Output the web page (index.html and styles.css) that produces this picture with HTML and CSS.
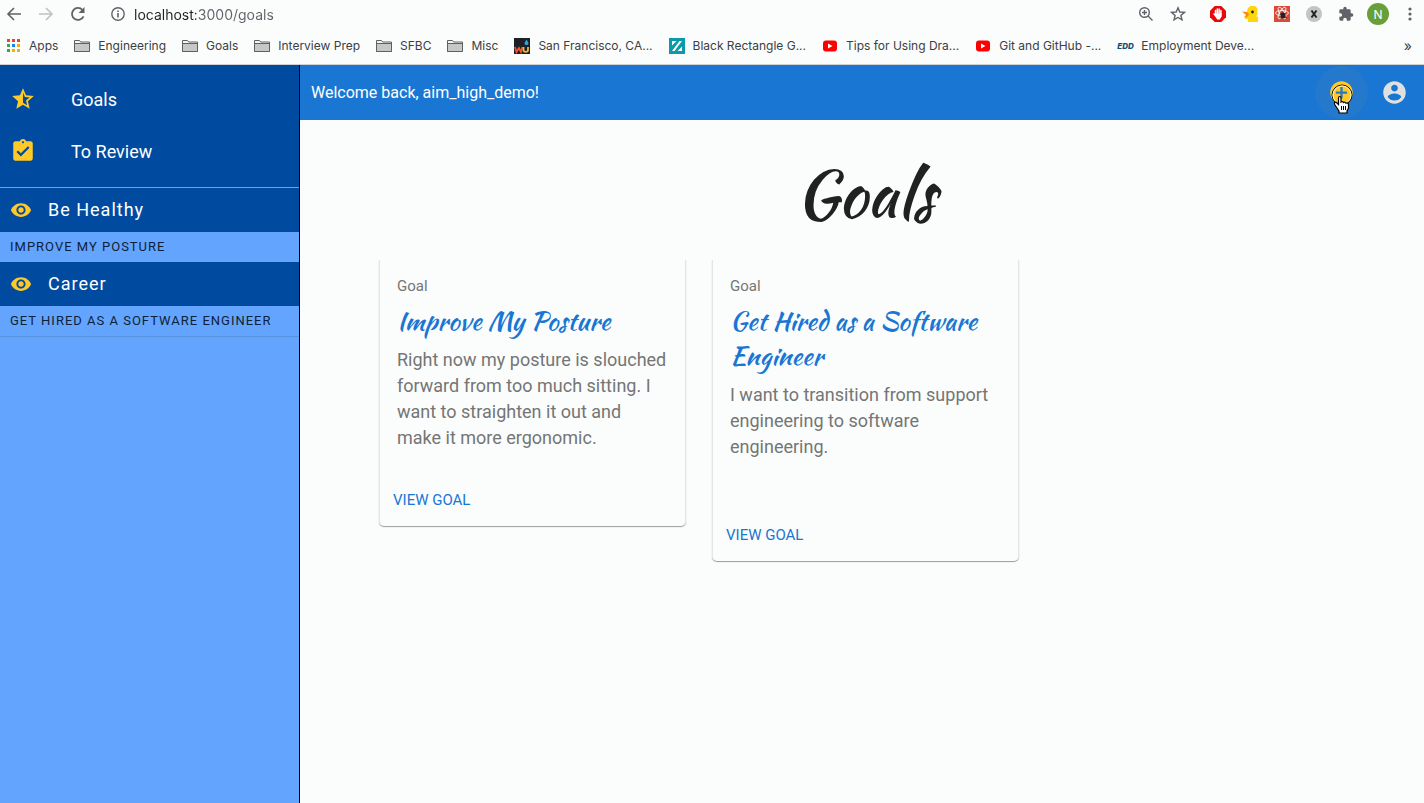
FILE: index.html
```html
<!DOCTYPE html>
<html lang="en">
<head>
<meta charset="utf-8">
<title>Goals</title>
<link rel="stylesheet" href="styles.css">
</head>
<body>
<svg class="defs" aria-hidden="true">
  <symbol id="folder" viewBox="0 0 16 14"><path d="M.5 12.500V1.500h5l1.200 1.500h8.800v9.500z" fill="#f3f4f4" stroke="#5d6060"/><path d="M1 5h14v7H1z" fill="#c6c8c8"/><path d="M.5 4.500h15M.5 12.500h15" stroke="#5d6060"/></symbol>
  <symbol id="video" viewBox="0 0 16 16"><rect x="1" y="2.500" width="14" height="11" rx="3" fill="#f00"/><path d="M6 5.500v5L10.500 8z" fill="#fff"/></symbol>
  <symbol id="eye" viewBox="0 0 24 24"><path d="M12 4.500C7 4.500 2.730 7.610 1 12c1.730 4.390 6 7.500 11 7.500s9.270-3.110 11-7.500c-1.730-4.390-6-7.500-11-7.500zM12 17c-2.760 0-5-2.240-5-5s2.240-5 5-5 5 2.240 5 5-2.240 5-5 5zm0-8c-1.660 0-3 1.340-3 3s1.340 3 3 3 3-1.340 3-3-1.340-3-3-3z"/></symbol>
</svg>
<header class="browser">
  <div class="toolbar">
    <button class="tool" aria-label="Back"><svg viewBox="0 0 16 16"><path d="M15 8H2M8 2L2 8l6 6" fill="none" stroke="#5f6368" stroke-width="1.600"/></svg></button>
    <button class="tool" aria-label="Forward"><svg viewBox="0 0 16 16"><path d="M1 8h13M8 2l6 6-6 6" fill="none" stroke="#bfc1c3" stroke-width="1.600"/></svg></button>
    <button class="tool" aria-label="Reload"><svg viewBox="0 0 16 16"><path d="M13.500 10.300A6 6 0 1 1 12.500 4" fill="none" stroke="#5f6368" stroke-width="1.800"/><path d="M14.500 1v6h-6z" fill="#5f6368"/></svg></button>
    <label class="address"><svg viewBox="0 0 16 16" aria-hidden="true"><circle cx="8" cy="8" r="6.200" fill="none" stroke="#5f6368" stroke-width="1.400"/><path d="M7.200 7h1.600v4.500H7.200zM7.200 4.500h1.600V6H7.200z" fill="#5f6368"/></svg>
      <input class="url" type="text" aria-label="Address" value="localhost:3000/goals"></label>
    <div class="extensions">
      <button class="tool" aria-label="Zoom"><svg viewBox="0 0 16 16" fill="none" stroke="#5f6368" stroke-width="1.400"><circle cx="6.500" cy="6.500" r="4.800"/><path d="M10 10l4.500 4.500M4 6.500h5M6.500 4v5"/></svg></button>
      <button class="tool" aria-label="Bookmark"><svg viewBox="0 0 16 16"><path d="M8 1.800l1.800 4.200 4.600.4-3.500 3 1.100 4.500L8 11.500l-4 2.400 1.100-4.500-3.500-3 4.600-.4z" fill="none" stroke="#5f6368" stroke-width="1.400"/></svg></button>
      <button class="tool ext-first" aria-label="Ad blocker"><svg viewBox="0 0 16 16"><path d="M4.700 0h6.600L16 4.700v6.600L11.300 16H4.700L0 11.300V4.700z" fill="#e8090c"/><path d="M4 8l2.500 2.500M5.500 9V4.500M7.300 8V3M9.100 8V3M10.900 9V4.500" stroke="#fff" stroke-width="1.500" stroke-linecap="round" fill="none"/><path d="M5 7.500h6.600v3L9.800 13.500H7.200L5 10z" fill="#fff"/></svg></button>
      <button class="tool" aria-label="Duck"><svg viewBox="0 0 16 16"><path d="M6 2L8.500 0H13l2.500 2.500v6L14 10.500h2V16H6v-3H3.500L2 11l3-2V5z" fill="#ffd60a"/><path d="M0 5.500l5 .5 2 2-1 2.500-3.500 1L4 9z" fill="#ff8a00"/><circle cx="10.500" cy="6" r="1.400" fill="#222"/></svg></button>
      <button class="tool" aria-label="React tools"><svg viewBox="0 0 16 16"><path d="M0 0h16v16H0z" fill="#d94a38"/><g fill="none" stroke="#fff" stroke-width=".8"><ellipse cx="8" cy="7" rx="6.500" ry="2.500"/><ellipse cx="8" cy="7" rx="6.500" ry="2.500" transform="rotate(60 8 7)"/><ellipse cx="8" cy="7" rx="6.500" ry="2.500" transform="rotate(120 8 7)"/></g><ellipse cx="9" cy="9.500" rx="2.500" ry="3" fill="#222"/><path d="M6 8l7 4M6.500 12L12 7.500" stroke="#222"/></svg></button>
      <button class="tool" aria-label="Clear"><svg viewBox="0 0 16 16"><circle cx="8" cy="8" r="8" fill="#c3c5c5"/><path d="M5.500 4.500l5 7M10.500 4.500l-5 7" stroke="#222" stroke-width="2"/></svg></button>
      <button class="tool" aria-label="Extensions"><svg viewBox="0 0 24 24"><path d="M20.500 11H19V7c0-1.100-.9-2-2-2h-4V3.500a2.500 2.500 0 0 0-5 0V5H4c-1.100 0-2 .9-2 2v3.800h1.500a2.700 2.700 0 0 1 0 5.400H2V20c0 1.100.9 2 2 2h3.800v-1.500a2.700 2.700 0 0 1 5.400 0V22H17c1.100 0 2-.9 2-2v-4h1.500a2.500 2.500 0 0 0 0-5z" fill="#5f6368"/></svg></button>
      <button class="profile">N</button>
      <button class="tool menu" aria-label="Menu"><svg viewBox="0 0 16 16" fill="#5f6368"><circle cx="8" cy="3" r="1.600"/><circle cx="8" cy="8" r="1.600"/><circle cx="8" cy="13" r="1.600"/></svg></button>
    </div>
  </div>
  <nav class="bookmarks" aria-label="Bookmarks">
    <a href="#"><svg viewBox="0 0 16 16"><path d="M2 1h3v3H2zM7 1h3v3H7zM12 1h3v3h-3z" fill="#ea4335"/><path d="M2 6h3v3H2zM2 11h3v3H2z" fill="#34a853"/><path d="M7 6h3v3H7z" fill="#1a83f0"/><path d="M12 6h3v3h-3zM7 11h3v3H7zM12 11h3v3h-3z" fill="#f9ab00"/></svg>Apps</a>
    <a href="#"><svg><use href="#folder"/></svg>Engineering</a>
    <a href="#"><svg><use href="#folder"/></svg>Goals</a>
    <a href="#"><svg><use href="#folder"/></svg>Interview Prep</a>
    <a href="#"><svg><use href="#folder"/></svg>SFBC</a>
    <a href="#"><svg><use href="#folder"/></svg>Misc</a>
    <a href="#"><svg viewBox="0 0 16 16"><path d="M0 0h16v16H0z" fill="#1e2023"/><path d="M1 9l1.500 5L5 10l2 4 1.500-5" fill="none" stroke="#f4512c" stroke-width="1.800"/><path d="M9.500 9v3c0 2.500 4.500 2.500 4.500 0V9" fill="none" stroke="#f5b82e" stroke-width="1.800"/><path d="M12.500 1.500c3 4 2 5.500 0 5.500s-3-1.500 0-5.500z" fill="#2aa5e0"/></svg>San Francisco, CA...</a>
    <a href="#"><svg viewBox="0 0 16 16"><path d="M0 0h16v16H0z" fill="#0a9aa8"/><path d="M3 3h4.500L3 7.500zM13 13H8.500L13 8.500zM10.500 3H13L5.500 13H3z" fill="#fff"/></svg>Black Rectangle G...</a>
    <a href="#"><svg><use href="#video"/></svg>Tips for Using Dra...</a>
    <a href="#"><svg><use href="#video"/></svg>Git and GitHub -...</a>
    <a href="#"><span class="edd" aria-hidden="true">EDD</span>Employment Deve...</a>
    <button class="more" aria-label="More bookmarks">»</button>
  </nav>
</header>
<div class="app">
  <aside class="sidebar">
    <nav class="primary">
      <a href="#"><svg viewBox="0 0 24 24"><path d="M22 9.240l-7.190-.62L12 2 9.190 8.630 2 9.240l5.460 4.730L5.820 21 12 17.270 18.180 21l-1.630-7.030L22 9.240zM12 15.400V6.100l1.710 4.040 4.380.38-3.320 2.880 1 4.280L12 15.400z"/></svg>Goals</a>
      <a href="#"><svg viewBox="0 0 24 24"><path d="M19 3h-4.180C14.400 1.840 13.300 1 12 1s-2.400.84-2.820 2H5c-1.100 0-2 .9-2 2v14c0 1.100.9 2 2 2h14c1.100 0 2-.9 2-2V5c0-1.100-.9-2-2-2zm-7 0c.55 0 1 .45 1 1s-.45 1-1 1-1-.45-1-1 .45-1 1-1zm-2 14l-4-4 1.410-1.410L10 14.170l6.590-6.590L18 9l-8 8z"/></svg>To Review</a>
    </nav>
    <nav class="categories">
      <a class="category" href="#"><svg><use href="#eye"/></svg>Be Healthy</a>
      <a class="entry" href="#">IMPROVE MY POSTURE</a>
      <a class="category" href="#"><svg><use href="#eye"/></svg>Career</a>
      <a class="entry" href="#">GET HIRED AS A SOFTWARE ENGINEER</a>
    </nav>
  </aside>
  <div class="page">
    <div class="appbar">
      <span class="welcome">Welcome back, aim_high_demo!</span>
      <button class="action hovered" aria-label="Add goal"><svg viewBox="0 0 24 24"><path d="M12 2C6.480 2 2 6.480 2 12s4.480 10 10 10 10-4.480 10-10S17.520 2 12 2zm5 11h-4v4h-2v-4H7v-2h4V7h2v4h4v2z" fill="#ffca28"/></svg>
        <svg class="pointer" viewBox="0 0 24 32" aria-hidden="true"><circle cx="12" cy="12" r="10" fill="none" stroke="#111" stroke-width="1"/><circle cx="12" cy="12" r="9" fill="none" stroke="#fff3c0" stroke-width="1"/><path d="M9 28l-4-6c-1.500-2.500.5-3.500 2-2l1.500 1.500V15c0-2 2.500-2 2.500 0v4c1-.8 2-.5 2.500.5 1-.7 2-.3 2.500.7 1.500-.7 2.500.3 2.500 1.500v3.500L17 28v2H9z" fill="#fff" stroke="#000" stroke-width="1.200"/><path d="M11.500 23v4M13.500 23v4M15.500 23v4" stroke="#000"/></svg></button>
      <button class="action" aria-label="Account"><svg viewBox="0 0 24 24"><path d="M12 2C6.480 2 2 6.480 2 12s4.480 10 10 10 10-4.480 10-10S17.520 2 12 2zm0 3c1.660 0 3 1.340 3 3s-1.340 3-3 3-3-1.340-3-3 1.340-3 3-3zm0 14.200c-2.500 0-4.710-1.280-6-3.220.03-1.990 4-3.080 6-3.080 1.990 0 5.970 1.090 6 3.080-1.290 1.940-3.500 3.220-6 3.220z" fill="#e0e0e0"/></svg></button>
    </div>
    <main class="content">
      <h1>Goals</h1>
      <div class="cards">
        <article class="card">
          <p class="kind">Goal</p>
          <h2>Improve My Posture</h2>
          <p class="text">Right now my posture is slouched forward from too much sitting. I want to straighten it out and make it more ergonomic.</p>
          <button class="view">VIEW GOAL</button>
        </article>
        <article class="card">
          <p class="kind">Goal</p>
          <h2>Get Hired as a Software Engineer</h2>
          <p class="text">I want to transition from support engineering to software engineering.</p>
          <button class="view">VIEW GOAL</button>
        </article>
      </div>
    </main>
  </div>
</div>
</body>
</html>
```
FILE: styles.css
```css
* { box-sizing: border-box; }
body {
  margin: 0;
  min-height: 100vh;
  display: flex;
  flex-direction: column;
  background: #fafdfc;
  font-family: Roboto, sans-serif;
  color: #212121;
}
.defs { display: none; }
button { border: 0; padding: 0; background: none; font: inherit; color: inherit; }
a { color: inherit; text-decoration: none; }
svg { display: block; flex: none; }
h1, h2, p { margin: 0; }

.browser { border-bottom: 1px solid #cfd1d2; font-family: Inter, sans-serif; }
.toolbar { display: flex; align-items: center; gap: 16px; height: 28px; padding: 0 6px; }
.tool svg, .address svg { width: 16px; height: 16px; }
.address { display: flex; flex: 1; align-items: center; gap: 8px; padding-left: 8px; }
.url {
  flex: 1;
  border: 0;
  padding: 0;
  font: 14px Inter, sans-serif;
  background: linear-gradient(90deg, #202124 62px, #5f6368 62px);
  background-clip: text;
  -webkit-text-fill-color: transparent;
}
.extensions { display: flex; align-items: center; gap: 16px; }
.ext-first { margin-left: 8px; }
.profile { width: 22px; height: 22px; margin: 0 -3px; border-radius: 50%; background: #689f38; color: #fff; font-size: 12px; }
.bookmarks { display: flex; align-items: center; gap: 16px; height: 36px; padding: 0 12px 1px 5px; font-size: 12px; color: #3c4043; white-space: nowrap; }
.bookmarks a { display: flex; align-items: center; gap: 8px; }
.bookmarks svg { width: 16px; height: 16px; }
.edd { width: 16px; font-size: 8px; font-weight: 800; font-style: italic; color: #0b4f78; }
.more { margin-left: auto; font-size: 14px; }

.app { display: flex; flex: 1; }
.sidebar { width: 300px; flex: none; border-right: 1px solid #000; background: #63a4ff; color: #fff; }
.primary { padding: 8px 0 10px; background: #004ba0; border-bottom: 1px solid #63a4ff; font-size: 18px; }
.primary a { display: flex; align-items: center; gap: 35px; height: 52px; padding-left: 10px; }
.primary svg { width: 26px; height: 26px; fill: #ffca28; }
.categories { border-bottom: 1px solid #5794e0; }
.category { display: flex; align-items: center; gap: 16px; height: 44px; padding: 0 0 1px 10px; background: #004ba0; font-size: 18px; letter-spacing: 1px; }
.category svg { width: 22px; height: 22px; fill: #ffca28; }
.entry { display: block; padding-left: 10px; line-height: 30px; font-size: 13px; letter-spacing: 1px; color: #0d1f38; }

.page { flex: 1; min-width: 0; }
.appbar { display: flex; align-items: center; height: 55px; padding: 0 3px 0 11px; background: #1976d2; color: #fff; }
.welcome { flex: 1; font-size: 16px; }
.action { position: relative; padding: 13px; border-radius: 50%; }
.action svg { width: 27px; height: 27px; }
.hovered { background: #2479cc; }
.action .pointer { position: absolute; left: 15px; top: 17px; width: 24px; height: 32px; }
.content { padding: 34px 72px 40px 79px; }
h1 { text-align: center; font: 400 65px/80px "Kaushan Script", cursive; }
.cards { display: grid; grid-template-columns: repeat(3, 1fr); gap: 26px; align-items: start; margin-top: 26px; }
.card {
  padding: 14px 18px 10px 17px;
  border: solid #e4e6e6;
  border-width: 0 1px;
  border-radius: 0 0 5px 5px;
  box-shadow: 0 1px 1px #9a9c9c;
  color: #757575;
}
.kind { font-size: 15px; line-height: 24px; }
h2 { padding: 6px 0 8px; font: 400 26px/35px "Kaushan Script", cursive; color: #1976d2; }
.text { min-height: 104px; font-size: 18px; line-height: 26px; }
.view { display: block; margin: 33px 0 0 -4px; line-height: 32px; font-size: 15px; color: #1976d2; }
```
